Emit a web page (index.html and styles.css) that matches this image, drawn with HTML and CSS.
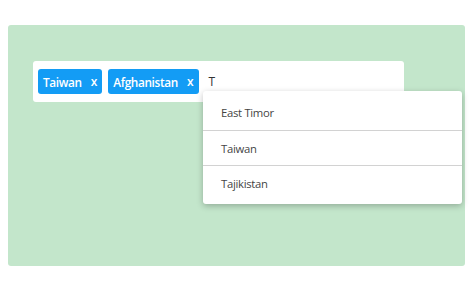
FILE: index.html
```html
<!DOCTYPE html>
<html>
<head>
<meta charset="utf-8">
<link rel="stylesheet" href="styles.css">
</head>
<body>
<div class="panel">
  <div class="field">
    <span class="tag">Taiwan<span class="x">x</span></span>
    <span class="tag">Afghanistan<span class="x">x</span></span>
    <span class="typed">T</span>
    <ul class="menu">
      <li>East Timor</li>
      <li>Taiwan</li>
      <li>Tajikistan</li>
    </ul>
  </div>
</div>
</body>
</html>
```
FILE: styles.css
```css
html, body { margin: 0; padding: 0; background: #fff; }
body {
  padding: 25px 9px 0 8px;
  font-family: "Open Sans", "Noto Sans", sans-serif;
}
.panel {
  background: #c3e6cb;
  border-radius: 3px;
  height: 241px;
  width: 457px;
  padding: 36px 0 0 25px;
  box-sizing: border-box;
}
.field {
  position: relative;
  background: #fff;
  border-radius: 3px;
  width: 371px;
  height: 41px;
  box-sizing: border-box;
  padding: 7px 5px;
  display: flex;
  align-items: center;
  gap: 6px;
}
.tag {
  display: inline-flex;
  align-items: center;
  height: 25px;
  background: #139cf5;
  color: #fff;
  border-radius: 3px;
  padding: 0 5px 0 5px;
  font-size: 11.8px;
  letter-spacing: -0.35px;
  font-weight: 600;
  box-sizing: border-box;
}
.tag .x { margin-left: 9px; font-size: 12px; font-weight: 600; letter-spacing: 0; }
.typed {
  margin-left: 4px;
  font-size: 12px;
  color: #333;
}
.menu {
  position: absolute;
  left: 170px;
  top: 30px;
  width: 259px;
  margin: 0;
  padding: 4px 0;
  list-style: none;
  background: #fff;
  border-radius: 3px;
  box-shadow: 0 2px 6px rgba(0,0,0,0.25);
  box-sizing: border-box;
}
.menu li {
  height: 35px;
  line-height: 35px;
  padding-left: 18px;
  font-size: 11.3px;
  letter-spacing: -0.3px;
  color: #444;
  border-top: 1px solid #d2d2d2;
  box-sizing: border-box;
}
.menu li:first-child { border-top: none; }
```
